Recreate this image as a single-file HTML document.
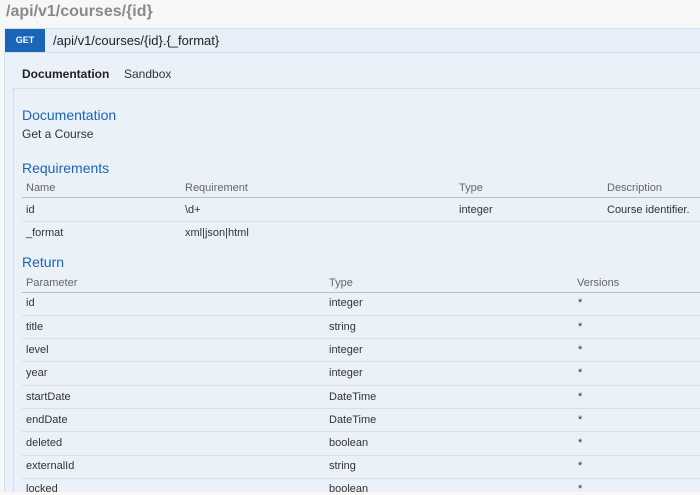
<!DOCTYPE html>
<html><head><style>
*{margin:0;padding:0;box-sizing:border-box}
body{width:700px;height:492px;overflow:hidden;background:#f7f7f7;font-family:"Liberation Sans",sans-serif;font-size:11px;color:#333;position:relative}
.a{position:absolute;white-space:nowrap}
.t{margin-top:1px}
.h{color:#1b64b5;font-size:14px}
.th{color:#666}
.ln{position:absolute;left:22px;right:0;height:1px;background:#d8dee5}
.hl{background:#b9bfc6}
</style></head><body>
<div class="a" style="left:6px;top:3px;font-size:16px;font-weight:bold;color:#8a8a8a">/api/v1/courses/{id}</div>
<div class="a" style="left:4px;top:28px;right:0;height:25px;background:#e6eef7;border-top:1px solid #d3dfec;border-bottom:1px solid #d3dfec"></div>
<div class="a" style="left:5px;top:29px;width:40px;height:23px;background:#1a65b7;color:#fff;font-size:9px;font-weight:bold;text-align:center;line-height:23px">GET</div>
<div class="a" style="left:53px;top:33px;font-size:13px;color:#222">/api/v1/courses/{id}.{_format}</div>
<div class="a" style="left:4px;top:53px;right:0;bottom:0;background:#ebf1f9;border-left:1px solid #d3dfec"></div>
<div class="a" style="left:22px;top:67px;font-size:12px;font-weight:bold;color:#222">Documentation</div>
<div class="a" style="left:124px;top:67px;font-size:12px;color:#333">Sandbox</div>
<div class="a" style="left:13px;top:88px;right:0;bottom:0;border-top:1px solid #d3dfec;border-left:1px solid #d3dfec"></div>
<div class="a h" style="left:22px;top:107px">Documentation</div>
<div class="a" style="left:22px;top:127px;font-size:12px">Get a Course</div>
<div class="a h" style="left:22px;top:160px">Requirements</div>
<div class="a th" style="left:26px;top:182px">Name</div>
<div class="a th" style="left:185px;top:182px">Requirement</div>
<div class="a th" style="left:459px;top:182px">Type</div>
<div class="a th" style="left:607px;top:182px">Description</div>
<div class="ln hl" style="top:197px"></div>
<div class="a" style="left:26px;top:204px">id</div>
<div class="a" style="left:185px;top:204px">\d+</div>
<div class="a" style="left:459px;top:204px">integer</div>
<div class="a" style="left:607px;top:204px">Course identifier.</div>
<div class="ln" style="top:221px"></div>
<div class="a" style="left:26px;top:227px">_format</div>
<div class="a" style="left:185px;top:227px">xml|json|html</div>
<div class="a h" style="left:22px;top:254px">Return</div>
<div class="a th" style="left:26px;top:277px">Parameter</div>
<div class="a th" style="left:329px;top:277px">Type</div>
<div class="a th" style="left:577px;top:277px">Versions</div>
<div class="ln hl" style="top:292px"></div>
<div class="a" style="left:26px;top:297px">id</div><div class="a" style="left:329px;top:297px">integer</div><div class="a" style="left:578px;top:297px">*</div>
<div class="ln" style="top:315px"></div>
<div class="a" style="left:26px;top:321px">title</div><div class="a" style="left:329px;top:321px">string</div><div class="a" style="left:578px;top:321px">*</div>
<div class="ln" style="top:338px"></div>
<div class="a" style="left:26px;top:344px">level</div><div class="a" style="left:329px;top:344px">integer</div><div class="a" style="left:578px;top:344px">*</div>
<div class="ln" style="top:361px"></div>
<div class="a" style="left:26px;top:367px">year</div><div class="a" style="left:329px;top:367px">integer</div><div class="a" style="left:578px;top:367px">*</div>
<div class="ln" style="top:385px"></div>
<div class="a" style="left:26px;top:391px">startDate</div><div class="a" style="left:329px;top:391px">DateTime</div><div class="a" style="left:578px;top:391px">*</div>
<div class="ln" style="top:408px"></div>
<div class="a" style="left:26px;top:414px">endDate</div><div class="a" style="left:329px;top:414px">DateTime</div><div class="a" style="left:578px;top:414px">*</div>
<div class="ln" style="top:431px"></div>
<div class="a" style="left:26px;top:437px">deleted</div><div class="a" style="left:329px;top:437px">boolean</div><div class="a" style="left:578px;top:437px">*</div>
<div class="ln" style="top:455px"></div>
<div class="a" style="left:26px;top:460px">externalId</div><div class="a" style="left:329px;top:460px">string</div><div class="a" style="left:578px;top:460px">*</div>
<div class="ln" style="top:478px"></div>
<div class="a" style="left:26px;top:483px">locked</div><div class="a" style="left:329px;top:483px">boolean</div><div class="a" style="left:578px;top:483px">*</div>
</body></html>
